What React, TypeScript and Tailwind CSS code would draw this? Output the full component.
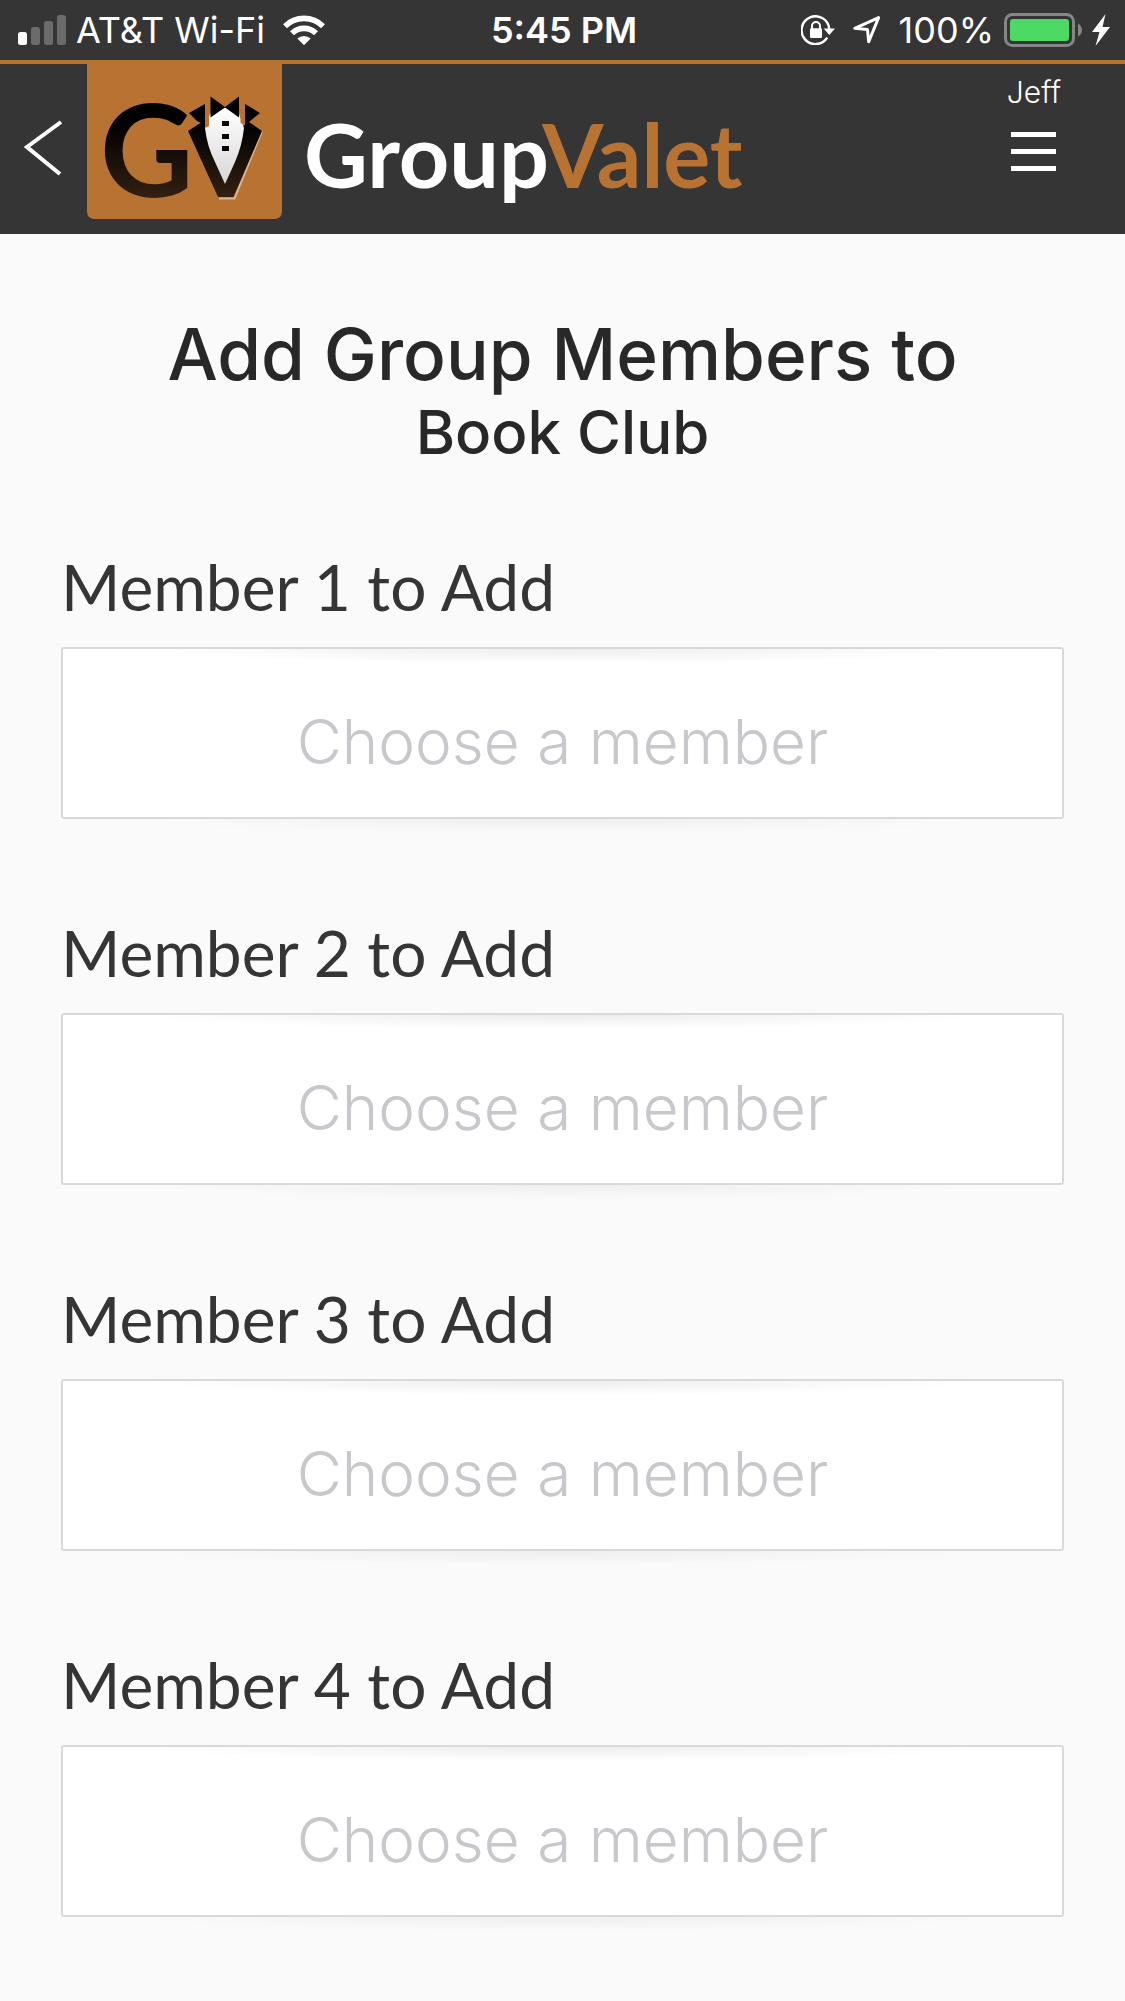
import { useId } from "react";

const members = [1, 2, 3, 4];

function SignalIcon() {
  return (
    <svg viewBox="0 0 48 30" className="h-[30px] w-12 shrink-0" aria-hidden="true">
      <rect x="0" y="17" width="9" height="13" rx="2.5" fill="#fff" />
      <rect x="13" y="12" width="9" height="18" rx="2.5" fill="#6b6b6b" />
      <rect x="26" y="6" width="9" height="24" rx="2.5" fill="#6b6b6b" />
      <rect x="39" y="0" width="9" height="30" rx="2.5" fill="#6b6b6b" />
    </svg>
  );
}

function WifiIcon() {
  return (
    <svg viewBox="0 0 42 30" className="h-[30px] w-[42px] shrink-0" aria-hidden="true">
      <g fill="none" stroke="#fff" strokeWidth="5.6">
        <path d="M2 11.2 A27 27 0 0 1 40 11.2" />
        <path d="M9 18.3 A17 17 0 0 1 33 18.3" />
      </g>
      <path d="M14.3 23.6 A9.6 9.6 0 0 1 27.7 23.6 L21 30.2 Z" fill="#fff" />
    </svg>
  );
}

function RotationLockIcon() {
  return (
    <svg viewBox="0 0 34 30" className="h-[30px] w-[34px] shrink-0" aria-hidden="true">
      <path d="M28.3 14 A13.9 13.9 0 1 0 26.2 22.6" fill="none" stroke="#fff" strokeWidth="2.4" />
      <path d="M22.7 13.6 H34 L28.3 20 Z" fill="#fff" />
      <rect x="9" y="13.3" width="12" height="9.7" rx="1.2" fill="#fff" />
      <path d="M11 14 V11 a4 4 0 0 1 8 0 V14" fill="none" stroke="#fff" strokeWidth="2" />
    </svg>
  );
}

function LocationIcon() {
  return (
    <svg viewBox="0 0 28 28" className="size-7 shrink-0" aria-hidden="true">
      <path
        d="M25.6 1.6 L1.8 12.3 L14.5 13.6 L15.7 25.8 Z"
        fill="none"
        stroke="#fff"
        strokeWidth="3"
        strokeLinejoin="round"
      />
    </svg>
  );
}

function BatteryIcon() {
  return (
    <svg viewBox="0 0 78 34" className="h-[34px] w-[78px] shrink-0" aria-hidden="true">
      <rect x="1.5" y="1.5" width="68" height="31" rx="7" fill="none" stroke="#868686" strokeWidth="3" />
      <rect x="6" y="6" width="59" height="22" rx="3" fill="#4cd964" />
      <path d="M74 10.5 Q78 13 78 17 Q78 21 74 23.5 Z" fill="#868686" />
    </svg>
  );
}

function BoltIcon() {
  return (
    <svg viewBox="0 0 18 32" className="h-8 w-[18px] shrink-0" aria-hidden="true">
      <path d="M13.5 0 L0 18 H7.5 L3.5 32 L18 13 H10.5 Z" fill="#fff" />
    </svg>
  );
}

function LogoTile() {
  const ink = useId();
  const shirt = useId();
  return (
    <svg
      viewBox="0 0 195 155"
      className="h-[155px] w-[195px] shrink-0 overflow-visible"
      role="img"
      aria-label="GroupValet logo"
    >
      <defs>
        <linearGradient id={ink} gradientUnits="userSpaceOnUse" x1="0" y1="40" x2="0" y2="134">
          <stop offset="0.2" stopColor="#000" />
          <stop offset="1" stopColor="#332012" />
        </linearGradient>
        <linearGradient id={shirt} x1="0" y1="0" x2="0" y2="1">
          <stop offset="0" stopColor="#fff" />
          <stop offset="1" stopColor="#d9d5d5" />
        </linearGradient>
      </defs>
      <path d="M0 0 H195 V147 Q195 155 187 155 H8 Q0 155 0 147 Z" fill="#b87333" />
      <text
        x="13"
        y="133"
        fontSize="129"
        fontWeight="700"
        fontFamily="Lato, sans-serif"
        fill={`url(#${ink})`}
      >
        G
      </text>
      {/* jacket, with a faint highlight along its right edge */}
      <path d="M175 67 L147.5 134.5 H132" fill="none" stroke="#dbb48d" strokeWidth="2" />
      <path d="M101 67 L115 58 L119 62 H156 L162 58 L175 67 L146.5 133 H131 Z" fill={`url(#${ink})`} />
      {/* collar wings */}
      <path d="M102 49 L118 40 V61 L110 57 Z" fill="#000" />
      <path d="M158 40 L173 49 L163 57 L158 62 Z" fill="#000" />
      <path
        d="M118 64 L123 50 L138 43 L152 50 L157 64 Q155 82 148 98 L138 120 L128 98 Q120 82 118 64 Z"
        fill={`url(#${shirt})`}
      />
      <path d="M118.5 46 V64 L122 62 V46 Z M157.5 42 V61 L153.5 59 V46 Z" fill="#b87333" />
      {/* bow tie and buttons */}
      <path d="M123.5 32.5 L138 43 L152 32.5 V53.5 L138 43.5 L123.5 53.5 Z" fill="#000" />
      <path d="M135 57 h7 v5 h-7 Z M135 70 h7 v5 h-7 Z M135 82 h7 v5 h-7 Z" fill="#000" />
    </svg>
  );
}

function StatusBar() {
  return (
    <div className="grid h-[60px] grid-cols-[1fr_auto_1fr] items-center pr-[15px] pl-[18px] font-['Inter',sans-serif] text-[36px] leading-[60px] whitespace-nowrap">
      <div className="flex items-center gap-[10px]">
        <SignalIcon />
        <span>AT&amp;T Wi-Fi</span>
        <span className="pl-2">
          <WifiIcon />
        </span>
      </div>
      <span className="font-semibold">5:45 PM</span>
      <div className="flex items-center justify-end gap-[10px]">
        <RotationLockIcon />
        <span className="px-2">
          <LocationIcon />
        </span>
        <span>100%</span>
        <BatteryIcon />
        <BoltIcon />
      </div>
    </div>
  );
}

function Header() {
  return (
    <div className="flex h-[174px] items-start border-t-4 border-[#b87333] pr-16">
      <button type="button" aria-label="Back" className="flex h-[168px] w-[87px] shrink-0 items-center pl-6">
        <svg viewBox="0 0 40 56" className="h-14 w-10" aria-hidden="true">
          <path d="M37 2 L3 27 L36 54" fill="none" stroke="#fff" strokeWidth="4" />
        </svg>
      </button>
      <LogoTile />
      <a
        href="#"
        className="mt-10 ml-[22px] font-['Lato',sans-serif] text-[88px] leading-[100px] font-bold text-white"
      >
        Group<span className="text-[#b87333]">Valet</span>
      </a>
      <div className="ml-auto flex flex-col items-center gap-5 pt-2">
        <span className="font-['Inter',sans-serif] text-[30px] leading-[40px] font-light">Jeff</span>
        <button type="button" aria-label="Menu" className="flex flex-col gap-3">
          <span className="h-[5px] w-[45px] bg-white" />
          <span className="h-[5px] w-[45px] bg-white" />
          <span className="h-[5px] w-[45px] bg-white" />
        </button>
      </div>
    </div>
  );
}

function MemberField({ number }: { number: number }) {
  const id = `member-${number}`;
  return (
    <div>
      <label
        htmlFor={id}
        className="block font-['Lato',sans-serif] text-[64px] leading-[80px] text-[#353535]"
      >
        Member {number} to Add
      </label>
      <input
        id={id}
        type="text"
        placeholder="Choose a member"
        className="mt-5 block h-[172px] w-full rounded-[3px] border-2 border-[#d9d9db] bg-white bg-[radial-gradient(ellipse_420px_14px_at_top,#ededed,#ffffff)] pt-4 text-center font-['Inter',sans-serif] text-[62px] font-light text-[#353535] outline-none placeholder:text-[#c7c7cc]"
      />
      <div className="h-[14px] bg-[radial-gradient(ellipse_420px_14px_at_top,#eeeeee,#fafafa)]" />
    </div>
  );
}

export default function App() {
  return (
    <div className="min-h-screen bg-[#fafafa]">
      <header className="bg-[#353535] text-white">
        <StatusBar />
        <Header />
      </header>
      <main className="px-[61px] pt-20">
        <h1 className="text-center font-['Inter',sans-serif] text-[71px] leading-[80px] font-medium text-[#282828]">
          Add Group Members to
          <span className="block text-[60px] leading-[76px]">Book Club</span>
        </h1>
        <form className="mt-[77px] flex flex-col gap-20">
          {members.map((n) => (
            <MemberField key={n} number={n} />
          ))}
        </form>
      </main>
    </div>
  );
}
